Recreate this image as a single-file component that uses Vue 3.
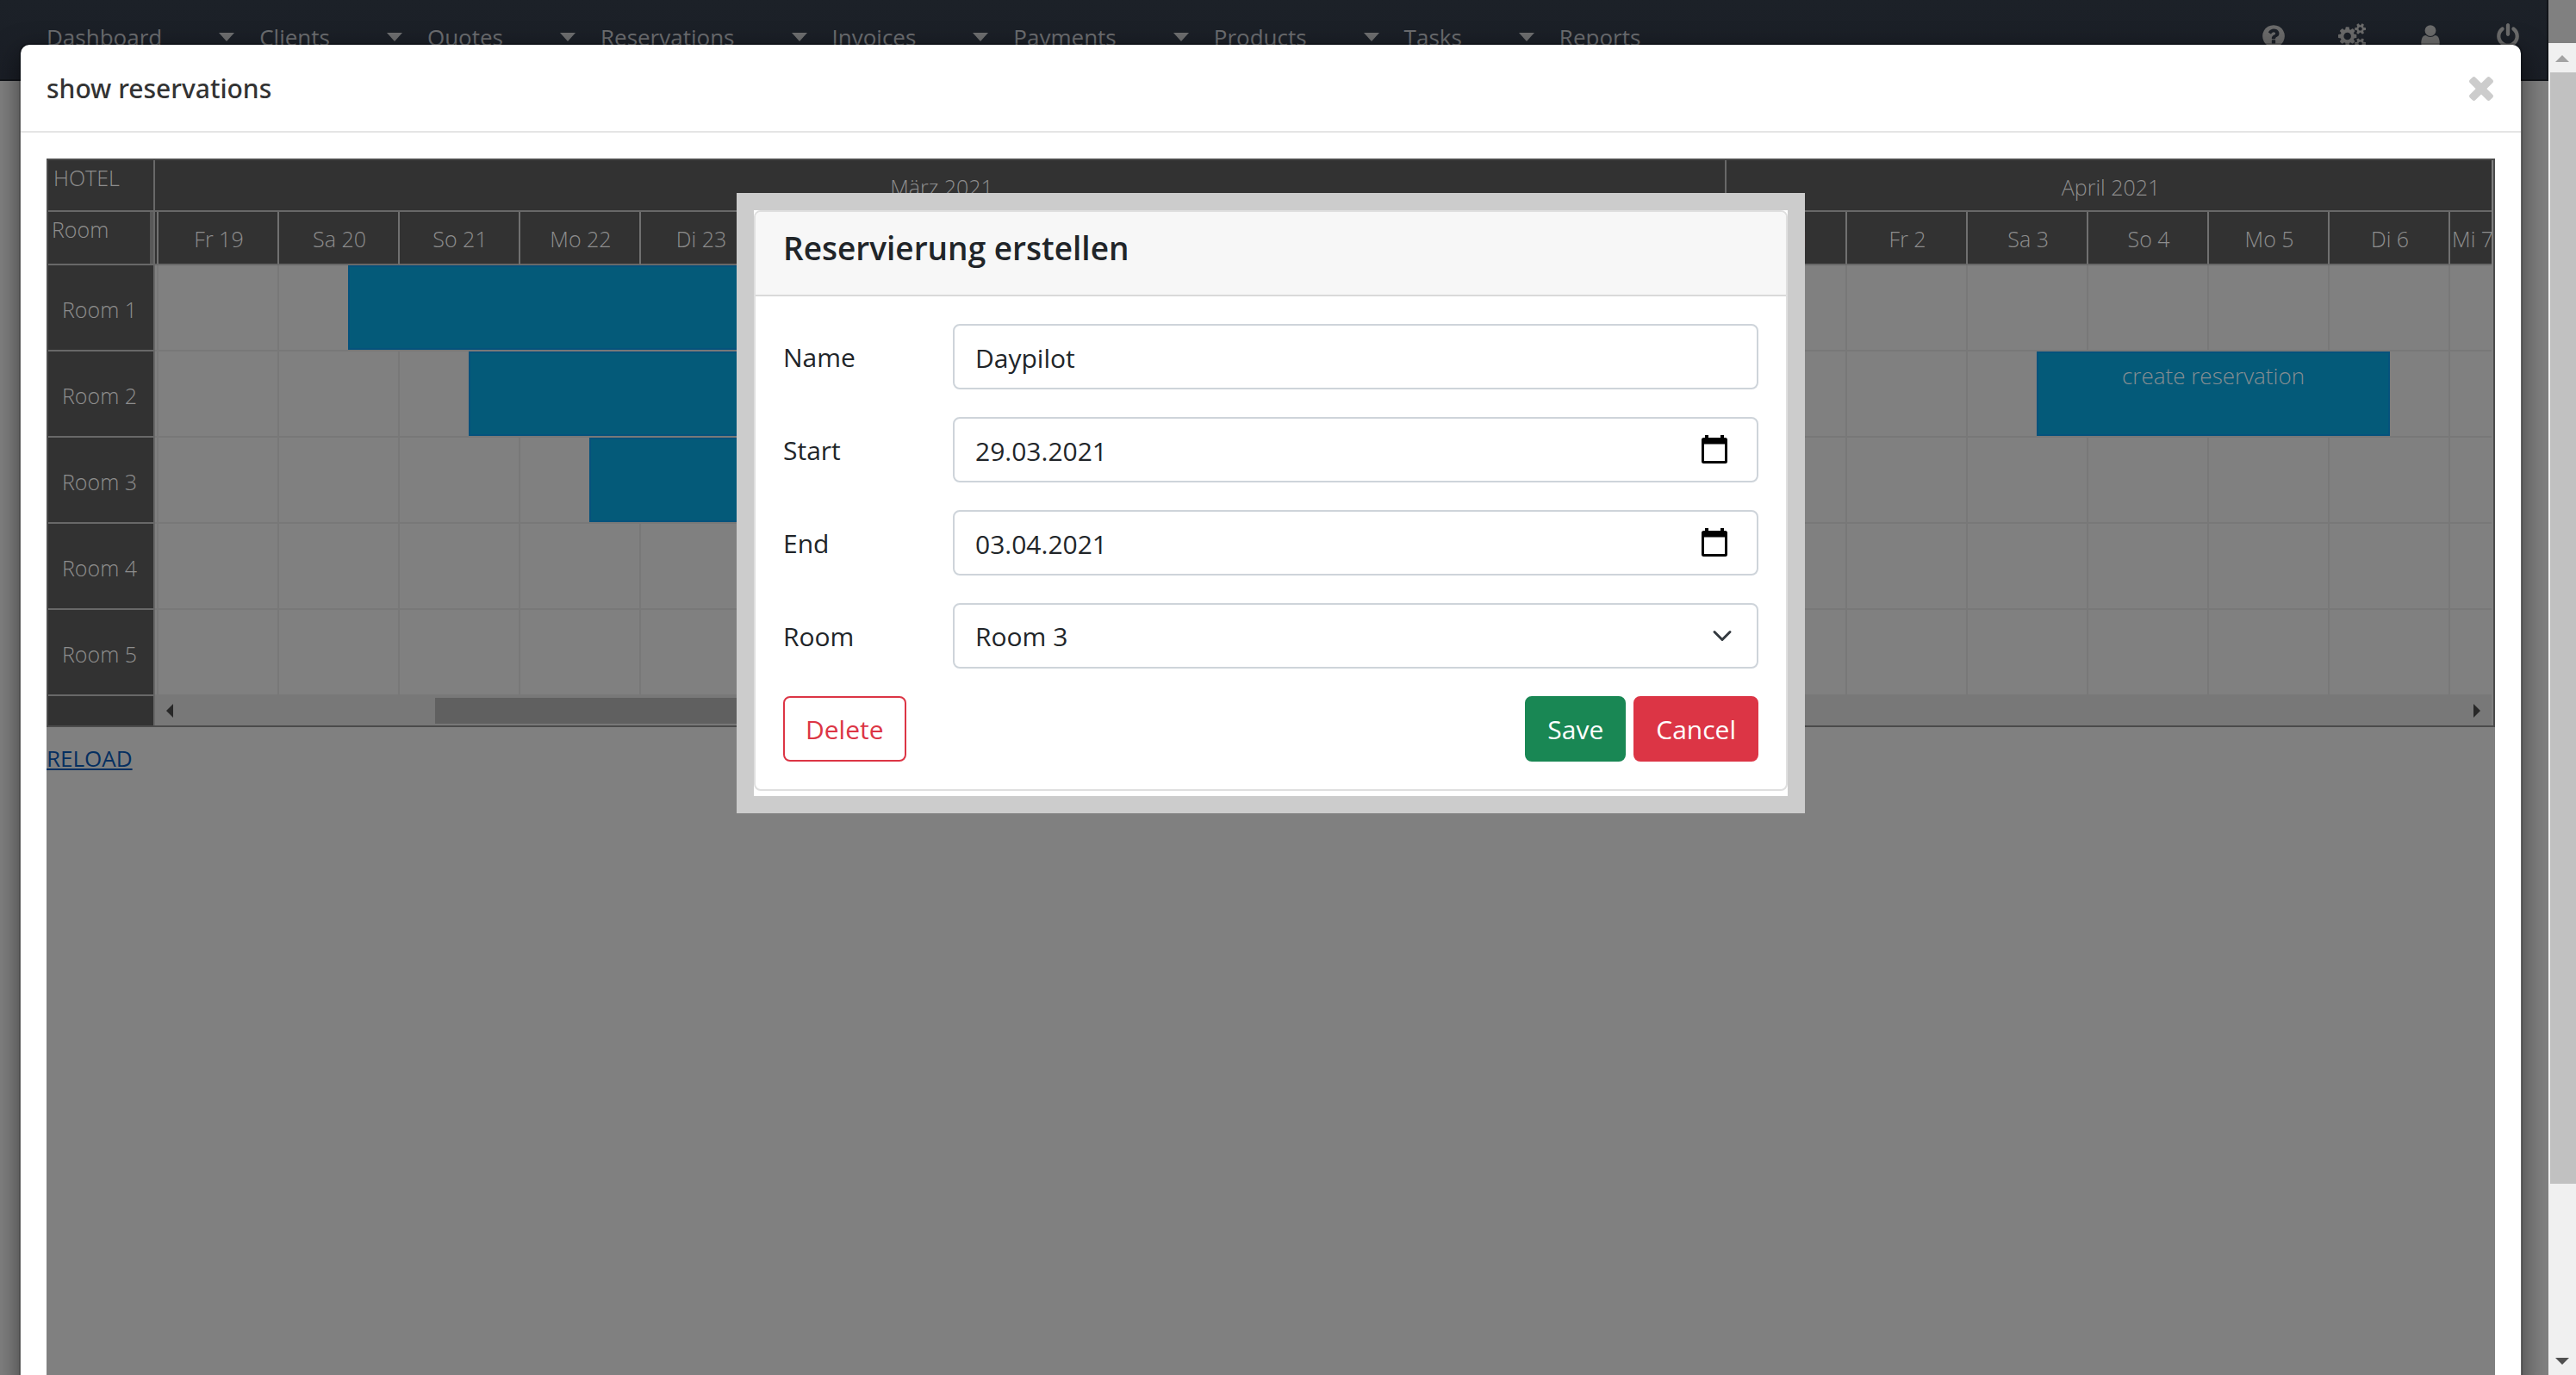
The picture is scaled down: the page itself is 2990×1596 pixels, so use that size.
<script setup>
import { ref } from 'vue'

const menu = ['Dashboard', 'Clients', 'Quotes', 'Reservations', 'Invoices', 'Payments', 'Products', 'Tasks', 'Reports']

const tools = [
  { name: 'Help', box: '0 0 1792 1792', width: 30, path: 'M1024 1376v-192q0-14-9-23t-23-9h-192q-14 0-23 9t-9 23v192q0 14 9 23t23 9h192q14 0 23-9t9-23zm256-672q0-88-55.500-163t-138.500-116-170-41q-243 0-371 213-15 24 8 42l132 100q7 6 19 6 16 0 25-12 53-68 86-92 34-24 86-24 48 0 85.500 26t37.500 59q0 38-20 61t-68 45q-63 28-115.500 86.500t-52.500 125.500v36q0 14 9 23t23 9h192q14 0 23-9t9-23q0-19 21.500-49.500t54.500-49.500q32-18 49-28.500t46-35 44.500-48 28-60.500 12.500-81zm384 192q0 209-103 385.500t-279.500 279.500-385.500 103-385.500-103-279.500-279.500-103-385.500 103-385.500 279.500-279.500 385.500-103 385.500 103 279.500 279.500 103 385.500z' },
  { name: 'Settings', box: '0 0 1920 1792', width: 32, path: 'M896 896q0-106-75-181t-181-75-181 75-75 181 75 181 181 75 181-75 75-181zm768 512q0-52-38-90t-90-38-90 38-38 90q0 53 37.500 90.500t90.500 37.500 90.500-37.500 37.500-90.500zm0-1024q0-52-38-90t-90-38-90 38-38 90q0 53 37.500 90.500t90.500 37.500 90.500-37.500 37.500-90.500zm-384 421v185q0 10-7 19.500t-16 10.500l-155 24q-11 35-32 76 34 48 90 115 7 11 7 20 0 12-7 19-23 30-82.500 89.500t-78.500 59.500q-11 0-21-7l-115-90q-37 19-77 31-11 108-23 155-7 24-30 24h-186q-11 0-20-7.500t-10-17.500l-23-153q-34-10-75-31l-118 89q-7 7-20 7-11 0-21-8-144-133-144-160 0-9 7-19 10-14 41-53t47-61q-23-44-35-82l-152-24q-10-1-17-9.500t-7-19.500v-185q0-10 7-19.500t16-10.500l155-24q11-35 32-76-34-48-90-115-7-11-7-20 0-12 7-20 22-30 82-89t79-59q11 0 21 7l115 90q34-18 77-32 11-108 23-154 7-24 30-24h186q11 0 20 7.500t10 17.500l23 153q34 10 75 31l118-89q8-7 20-7 11 0 21 8 144 133 144 160 0 8-7 19-12 16-42 54t-45 60q23 48 34 82l152 23q10 2 17 10.500t7 19.500zm640 533v140q0 16-149 31-12 27-30 52 51 113 51 138 0 4-4 7-122 71-124 71-8 0-46-47t-52-68q-20 2-30 2t-30-2q-14 21-52 68t-46 47q-2 0-124-71-4-3-4-7 0-25 51-138-18-25-30-52-149-15-149-31v-140q0-16 149-31 13-29 30-52-51-113-51-138 0-4 4-7 4-2 35-20t59-34 30-16q8 0 46 46.500t52 67.500q20-2 30-2t30 2q51-71 92-112l6-2q4 0 124 70 4 3 4 7 0 25-51 138 17 23 30 52 149 15 149 31zm0-1024v140q0 16-149 31-12 27-30 52 51 113 51 138 0 4-4 7-122 71-124 71-8 0-46-47t-52-68q-20 2-30 2t-30-2q-14 21-52 68t-46 47q-2 0-124-71-4-3-4-7 0-25 51-138-18-25-30-52-149-15-149-31v-140q0-16 149-31 13-29 30-52-51-113-51-138 0-4 4-7 4-2 35-20t59-34 30-16q8 0 46 46.500t52 67.500q20-2 30-2t30 2q51-71 92-112l6-2q4 0 124 70 4 3 4 7 0 25-51 138 17 23 30 52 149 15 149 31z' },
  { name: 'Account', box: '0 0 1792 1792', width: 30, path: 'M1536 1399q0 109-62.500 187t-150.500 78h-854q-88 0-150.500-78t-62.500-187q0-85 8.500-160.500t31.500-152 58.500-131 94-89 134.500-34.500q131 128 313 128t313-128q76 0 134.500 34.500t94 89 58.500 131 31.500 152 8.500 160.500zm-256-887q0 159-112.500 271.500t-271.500 112.500-271.500-112.500-112.500-271.500 112.500-271.500 271.500-112.500 271.500 112.500 112.500 271.500z' },
  { name: 'Log out', box: '0 0 1792 1792', width: 30, path: 'M1664 896q0 156-61 298t-164 245-245 164-298 61-298-61-245-164-164-245-61-298q0-182 80.500-343t226.500-270q43-32 95.500-25t83.500 50q32 42 24.500 94.500t-49.500 84.500q-98 74-151.500 181t-53.500 228q0 104 40.500 198.500t109.500 163.500 163.500 109.500 198.500 40.500 198.500-40.500 163.500-109.500 109.500-163.500 40.500-198.500q0-121-53.500-228t-151.500-181q-42-32-49.500-84.500t24.500-94.500q31-43 84-50t95 25q146 109 226.500 270t80.500 343zm-640-768v640q0 52-38 90t-90 38-90-38-38-90v-640q0-52 38-90t90-38 90 38 38 90z' },
]

// The eight days covered by the open popup carry no caption.
const days = ['Fr 19', 'Sa 20', 'So 21', 'Mo 22', 'Di 23', ...Array(8).fill(''), 'Do 1', 'Fr 2', 'Sa 3', 'So 4', 'Mo 5', 'Di 6', 'Mi 7']

// Bookings run from noon to noon; left and width are measured on the timeline.
const rooms = [
  { name: 'Room 1', events: [{ left: 224, width: 690, text: '' }] },
  { name: 'Room 2', events: [{ left: 364, width: 690, text: '' }, { left: 2184, width: 410, text: 'create reservation' }] },
  { name: 'Room 3', events: [{ left: 504, width: 690, text: '' }] },
  { name: 'Room 4', events: [] },
  { name: 'Room 5', events: [] },
]

const form = ref({ name: 'Daypilot', start: '29.03.2021', end: '03.04.2021', room: 'Room 3' })
</script>

<template>
  <div class="window">
    <div class="page">
      <header class="topbar">
        <nav class="menu">
          <a v-for="(item, i) in menu" :key="item" href="#" class="menu-item">
            {{ item }}
            <svg v-if="i < menu.length - 1" class="caret" viewBox="0 0 18 10" aria-hidden="true"><path d="M0 0h18l-9 10z" /></svg>
          </a>
        </nav>
        <div class="tools">
          <a v-for="tool in tools" :key="tool.name" href="#" :aria-label="tool.name">
            <svg :viewBox="tool.box" :width="tool.width" height="30"><path :d="tool.path" /></svg>
          </a>
        </div>
      </header>

      <section class="modal" role="dialog" aria-labelledby="modal-title">
        <div class="modal-header">
          <h1 id="modal-title">show reservations</h1>
          <button type="button" class="close" aria-label="Close">
            <svg viewBox="302 366 1188 1188" width="28" height="28"><path d="M1490 1322q0 40-28 68l-136 136q-28 28-68 28t-68-28l-294-294-294 294q-28 28-68 28t-68-28l-136-136q-28-28-28-68t28-68l294-294-294-294q-28-28-28-68t28-68l136-136q28-28 68-28t68 28l294 294 294-294q28-28 68-28t68 28l136 136q28 28 28 68t-28 68l-294 294 294 294q28 28 28 68z" /></svg>
          </button>
        </div>

        <div class="modal-body">
          <div class="frame">
            <div class="scheduler">
              <table>
                <colgroup>
                  <col class="col-room">
                  <col class="col-edge">
                  <col v-for="n in days.length - 1" :key="n" class="col-day">
                  <col>
                </colgroup>
                <thead>
                  <tr class="months">
                    <th class="corner">HOTEL</th>
                    <th colspan="14">März 2021</th>
                    <th colspan="7">April 2021</th>
                  </tr>
                  <tr class="days">
                    <th class="corner splitter">Room</th>
                    <th class="edge"></th>
                    <th v-for="(day, i) in days" :key="i">{{ day }}</th>
                  </tr>
                </thead>
                <tbody>
                  <tr v-for="room in rooms" :key="room.name">
                    <th scope="row">{{ room.name }}</th>
                    <td class="edge">
                      <div v-for="event in room.events" :key="event.left" class="event" :style="{ left: event.left + 'px', width: event.width + 'px' }">{{ event.text }}</div>
                    </td>
                    <td v-for="(day, i) in days" :key="i"></td>
                  </tr>
                </tbody>
              </table>
              <div class="scroll-row">
                <div class="scroll-corner"></div>
                <div class="hscroll">
                  <svg viewBox="0 0 8 16" width="8" height="16" aria-hidden="true"><path d="M8 0v16L0 8z" /></svg>
                  <div class="hscroll-track"><div class="hscroll-thumb"></div></div>
                  <svg viewBox="0 0 8 16" width="8" height="16" aria-hidden="true"><path d="M0 0v16l8-8z" /></svg>
                </div>
              </div>
            </div>
            <a href="#" class="reload">RELOAD</a>

            <div class="popup" role="dialog" aria-labelledby="popup-title">
              <div class="popup-page">
                <form class="card" @submit.prevent>
                  <h2 id="popup-title">Reservierung erstellen</h2>
                  <div class="card-body">
                    <div class="row">
                      <label for="name">Name</label>
                      <div class="field"><input id="name" v-model="form.name" type="text"></div>
                    </div>
                    <div class="row">
                      <label for="start">Start</label>
                      <div class="field">
                        <input id="start" v-model="form.start" type="text">
                        <button type="button" class="pick" aria-label="Pick start date"><svg viewBox="0 0 30 34" width="30" height="34"><path fill-rule="evenodd" d="M4 0h4v3h14V0h4v3h1.500A2.500 2.500 0 0 1 30 5.500v25a2.500 2.500 0 0 1-2.500 2.500h-25A2.500 2.500 0 0 1 0 30.500v-25A2.500 2.500 0 0 1 2.500 3H4zM3 10.500V30h24V10.500z" /></svg></button>
                      </div>
                    </div>
                    <div class="row">
                      <label for="end">End</label>
                      <div class="field">
                        <input id="end" v-model="form.end" type="text">
                        <button type="button" class="pick" aria-label="Pick end date"><svg viewBox="0 0 30 34" width="30" height="34"><path fill-rule="evenodd" d="M4 0h4v3h14V0h4v3h1.500A2.500 2.500 0 0 1 30 5.500v25a2.500 2.500 0 0 1-2.500 2.500h-25A2.500 2.500 0 0 1 0 30.500v-25A2.500 2.500 0 0 1 2.500 3H4zM3 10.500V30h24V10.500z" /></svg></button>
                      </div>
                    </div>
                    <div class="row">
                      <label for="room">Room</label>
                      <div class="field">
                        <select id="room" v-model="form.room">
                          <option v-for="room in rooms" :key="room.name">{{ room.name }}</option>
                        </select>
                      </div>
                    </div>
                    <div class="actions">
                      <button type="button" class="btn btn-outline">Delete</button>
                      <div class="actions-end">
                        <button type="submit" class="btn btn-save">Save</button>
                        <button type="button" class="btn btn-cancel">Cancel</button>
                      </div>
                    </div>
                  </div>
                </form>
              </div>
            </div>
          </div>
        </div>
      </section>
    </div>

    <div class="vscroll" aria-hidden="true">
      <div class="vscroll-cap"><svg viewBox="0 0 16 8" width="16" height="8"><path d="M8 0l8 8H0z" /></svg></div>
      <div class="vscroll-track"><div class="vscroll-thumb"></div></div>
      <div class="vscroll-cap vscroll-down"><svg viewBox="0 0 16 8" width="16" height="8"><path d="M0 0h16L8 8z" /></svg></div>
    </div>
  </div>
</template>

<style>
body {
  background: #808080;
}
</style>

<style scoped>
* {
  box-sizing: border-box;
}

.window {
  display: grid;
  grid-template-columns: minmax(0, 1fr) 32px;
  height: 100vh;
  overflow: hidden;
  font-family: "Open Sans", "Noto Sans", sans-serif;
  background: #808080;
}

svg {
  display: block;
  flex: none;
}

button,
input,
select {
  font: inherit;
  color: inherit;
}

.page {
  position: relative;
  overflow: hidden;
}

/* Top bar */
.topbar {
  display: flex;
  justify-content: space-between;
  align-items: flex-start;
  height: 94px;
  padding: 25px 30px 0 54px;
  background: linear-gradient(#1c2128, #1a1e26);
  border: solid #111419;
  border-width: 0 2px 2px 0;
}

.menu {
  display: flex;
  gap: 29px;
}

.menu-item {
  display: flex;
  align-items: center;
  gap: 66px;
  font-size: 26px;
  line-height: 36px;
  color: #6b6d70;
  text-decoration: none;
}

.caret {
  width: 18px;
  height: 10px;
  fill: #6e6f70;
}

.tools {
  display: flex;
  gap: 60px;
  padding-top: 2px;
  fill: #6b6b6b;
}

/* Outer dialog */
.modal {
  position: absolute;
  top: 50px;
  right: 30px;
  bottom: -20px;
  left: 22px;
  display: flex;
  flex-direction: column;
  background: #fff;
  background-clip: padding-box;
  border: 2px solid rgba(0, 0, 0, 0.2);
  border-radius: 12px;
  box-shadow: 0 10px 30px rgba(0, 0, 0, 0.5);
}

.modal-header {
  display: flex;
  justify-content: space-between;
  align-items: center;
  height: 102px;
  padding: 2px 32px 0 30px;
  border-bottom: 2px solid #e5e5e5;
}

h1 {
  margin: 0;
  font: 500 30px/40px "Noto Sans", sans-serif;
  color: #333;
}

.close {
  padding: 0;
  border: 0;
  background: none;
  fill: #ccc;
}

.modal-body {
  flex: 1;
  display: flex;
  padding: 30px 30px 0;
}

.frame {
  position: relative;
  flex: 1;
  min-width: 0;
  background: #808080;
}

/* Scheduler */
.scheduler {
  padding-right: 2px;
  border: 2px solid #4b4b4b;
  overflow: hidden;
}

table {
  width: 100%;
  table-layout: fixed;
  border-collapse: separate;
  border-spacing: 0;
}

.col-room {
  width: 124px;
}

.col-edge {
  width: 4px;
}

.col-day {
  width: 140px;
}

th,
td {
  height: 100px;
  padding: 4px 0 0;
  border: solid #787878;
  border-width: 0 2px 2px 0;
}

th {
  font-size: 25px;
  line-height: 36px;
  font-weight: 300;
  text-align: center;
  white-space: nowrap;
  color: #8e8e8e;
  background: #323232;
  border-color: #686868;
}

tr > :last-child {
  border-right: 0;
}

.months th {
  height: 60px;
  padding-left: 4px;
}

.days th {
  height: 62px;
  padding: 2px 0 0 2px;
  border-right-color: #707070;
}

.days .edge {
  padding: 0;
}

thead .corner {
  padding: 2px 0 0 6px;
  text-align: left;
  vertical-align: top;
}

.days .splitter {
  padding: 2px 0 0 4px;
  border-right-color: #686868;
  box-shadow: inset -4px 0 #595959;
}

tbody th {
  padding-left: 16px;
  text-align: left;
}

.edge {
  position: relative;
}

.event {
  position: absolute;
  top: 0;
  bottom: 0;
  padding-top: 8px;
  border: 2px solid #05527c;
  background: #045a79;
  font-size: 26px;
  line-height: 36px;
  font-weight: 300;
  text-align: center;
  white-space: nowrap;
  color: #868e92;
}

.scroll-row {
  display: flex;
  height: 34px;
}

.scroll-corner {
  width: 124px;
  background: #323232;
  border-right: 2px solid #686868;
}

.hscroll {
  flex: 1;
  display: flex;
  align-items: center;
  gap: 13px;
  padding: 0 13px;
  background: #787878;
  fill: #282828;
}

.hscroll-track {
  flex: 1;
}

.hscroll-thumb {
  width: 45%;
  height: 30px;
  margin-left: 11%;
  background: #606060;
}

.reload {
  display: inline-block;
  padding-top: 18px;
  font-size: 26px;
  line-height: 36px;
  color: #052f60;
}

/* Reservation popup */
.popup {
  position: absolute;
  top: 40px;
  left: 50%;
  width: 1240px;
  margin-left: -620px;
  padding: 20px;
  background: #ccc;
  font-size: 30px;
  line-height: 44px;
  color: #212529;
}

.popup-page {
  padding-bottom: 6px;
  background: #fff;
}

.card {
  border: 2px solid #dfdfdf;
  border-radius: 8px;
  overflow: hidden;
}

h2 {
  margin: 0;
  padding: 16px 32px 28px;
  font-size: 37px;
  line-height: 52px;
  font-weight: 600;
  background: #f7f7f7;
  border-bottom: 2px solid #d9d9d9;
}

.card-body {
  display: flex;
  flex-direction: column;
  gap: 32px;
  padding: 32px;
}

.row {
  display: grid;
  grid-template-columns: 197px minmax(0, 1fr);
  align-items: center;
}

label {
  padding-top: 2px;
}

.field {
  display: flex;
  align-items: center;
  height: 76px;
  border: 2px solid #ced4da;
  border-radius: 8px;
  background: #fff;
}

.field input,
.field select {
  flex: 1;
  min-width: 0;
  height: 72px;
  padding: 2px 24px 0;
  border: 0;
  border-radius: 6px;
  background: none;
  outline: 0;
}

.field select {
  appearance: none;
  background: url("data:image/svg+xml,%3Csvg xmlns='http://www.w3.org/2000/svg' viewBox='0 0 16 16'%3E%3Cpath fill='none' stroke='%23343a40' stroke-linecap='round' stroke-linejoin='round' stroke-width='2' d='M2 5l6 6 6-6'/%3E%3C/svg%3E") no-repeat right 24px center / 32px 24px;
}

.pick {
  padding: 0;
  margin-right: 34px;
  border: 0;
  background: none;
}

.actions,
.actions-end {
  display: flex;
  justify-content: space-between;
}

.actions-end {
  gap: 9px;
}

.btn {
  height: 76px;
  padding: 2px 24px 0;
  border: 2px solid;
  border-radius: 8px;
  color: #fff;
}

.btn-outline {
  color: #dc3545;
  border-color: #dc3545;
  background: #fff;
}

.btn-save {
  background: #198754;
  border-color: #198754;
}

.btn-cancel {
  background: #dc3545;
  border-color: #dc3545;
}

/* Window scrollbar */
.vscroll {
  display: flex;
  flex-direction: column;
  margin-top: 50px;
  background: #f0f0f0;
}

.vscroll-cap {
  display: flex;
  align-items: center;
  justify-content: center;
  height: 34px;
  padding-top: 2px;
  fill: #a3a3a3;
}

.vscroll-down {
  fill: #505050;
}

.vscroll-track {
  flex: 1;
  padding: 0 0 188px 2px;
}

.vscroll-thumb {
  height: 100%;
  background: #c1c1c1;
}
</style>
